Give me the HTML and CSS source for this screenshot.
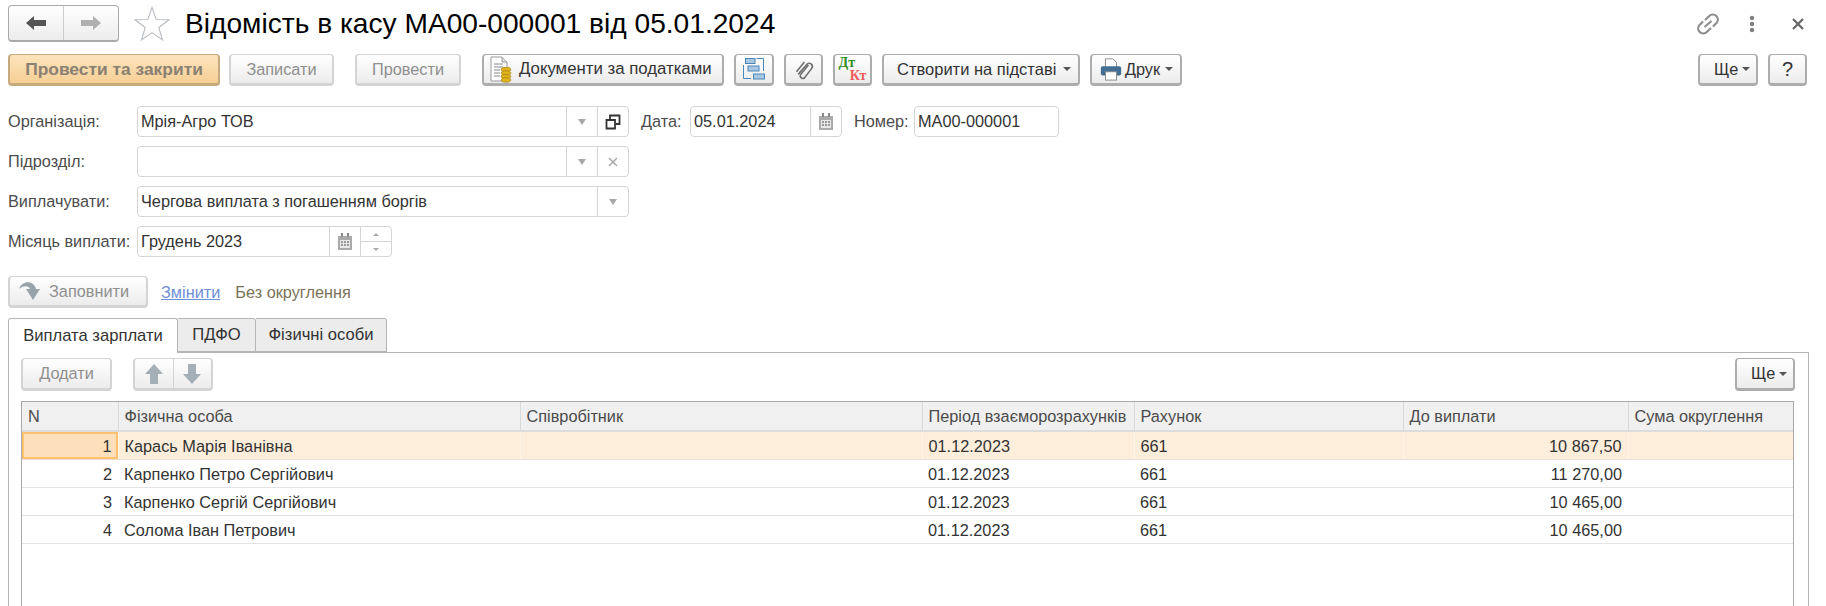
FILE: index.html
```html
<!DOCTYPE html>
<html lang="uk">
<head>
<meta charset="utf-8">
<title>Відомість в касу</title>
<link rel="stylesheet" href="styles.css">
</head>
<body>
<div class="page">
  <header class="titlebar">
    <div class="nav">
      <span class="nav-cell"><svg width="22" height="16" viewBox="0 0 22 16"><path d="M1 8 9 1v4h12v6H9v4z" fill="#555"/></svg></span>
      <span class="nav-cell nav-next"><svg width="22" height="16" viewBox="0 0 22 16"><path d="M21 8 13 1v4H1v6h12v4z" fill="#b0b0b0"/></svg></span>
    </div>
    <svg class="star" width="36" height="36" viewBox="0 0 36 36"><path d="M18 1.500 22.200 13.500 35 13.800 24.800 21.500 28.500 34 18 26.600 7.500 34 11.200 21.500 1 13.800 13.800 13.500z" fill="#fff" stroke="#b9bdc2" stroke-width="1.100"/></svg>
    <h1 class="title">Відомість в касу МА00-000001 від 05.01.2024</h1>
    <div class="win-tools">
      <svg class="tool-link" width="26" height="24" viewBox="0 0 26 24" fill="none" stroke="#8f8f8f" stroke-width="2.200"><path d="M10 8 14 4.200a5 5 0 0 1 7.500 0 5 5 0 0 1 0 6.800l-3.500 3.500"/><path d="M16 16l-4 3.800a5 5 0 0 1-7.500 0 5 5 0 0 1 0-6.800L8 9.500"/><path d="M9.500 15 16.500 9"/></svg>
      <svg class="tool-dots" width="6" height="18" viewBox="0 0 6 18" fill="#808080"><circle cx="3" cy="3" r="2.200"/><circle cx="3" cy="9" r="2.200"/><circle cx="3" cy="15" r="2.200"/></svg>
      <svg class="tool-close" width="12" height="12" viewBox="0 0 12 12" stroke="#666" stroke-width="2.200"><path d="M1 1l10 10M11 1 1 11"/></svg>
    </div>
  </header>

  <div class="cmdbar">
    <button class="btn btn-default w-close">Провести та закрити</button>
    <button class="btn btn-off w-save">Записати</button>
    <button class="btn btn-off w-post">Провести</button>
    <button class="btn w-docs">
      <svg width="28" height="28" viewBox="0 0 28 28"><path d="M5 2h11l5 5v19H5z" fill="#fff" stroke="#999"/><path d="M16 2v5h5" fill="#ddd" stroke="#999"/><path d="M8 9h9M8 12h9M8 15h6M8 18h6M8 21h6" stroke="#888"/><g fill="#e2b21d" stroke="#a07c0a" stroke-width=".7"><ellipse cx="20" cy="14.500" rx="4.800" ry="2.200"/><ellipse cx="20" cy="18" rx="4.800" ry="2.200"/><ellipse cx="20" cy="21.500" rx="4.800" ry="2.200"/><ellipse cx="20" cy="25" rx="4.800" ry="2.200"/></g></svg>
      <span>Документи за податками</span>
    </button>
    <button class="btn btn-icon w-str">
      <svg width="22" height="22" viewBox="0 0 22 22" fill="none" stroke="#4a86b8"><rect x="2.500" y=".5" width="9.500" height="5" fill="#a9c8e2"/><rect x="5" y="8" width="11" height="5" fill="#a9c8e2"/><rect x="10.500" y="16" width="11" height="5" fill="#a9c8e2"/><path d="M.5 7v13.500H8M13.500 .5h7V13"/></svg>
    </button>
    <button class="btn btn-icon w-att">
      <svg width="22" height="23" viewBox="0 0 24 26" fill="none" stroke="#6f6f6f" stroke-width="1.800"><path d="M17 8 8 19a3 3 0 0 0 4.500 3.600l8-10.600c3-4-2.500-8.500-5.500-4.700L5.500 18.500"/><path d="M3.500 15.500 12.500 4.500"/></svg>
    </button>
    <button class="btn btn-icon w-dt"><span class="dtkt"><b class="dt">Дт</b><b class="kt">Кт</b></span></button>
    <button class="btn w-make"><span>Створити на підставі</span><i class="caret"></i></button>
    <button class="btn w-print">
      <svg width="24" height="24" viewBox="0 0 26 26"><path d="M7 2h8l4 4v6H7z" fill="#fff" stroke="#888"/><rect x="2" y="10" width="22" height="10" rx="2" fill="#446f94"/><rect x="7" y="16" width="12" height="9" fill="#fff" stroke="#888"/></svg>
      <span>Друк</span><i class="caret"></i>
    </button>
    <span class="spacer"></span>
    <button class="btn w-more"><span>Ще</span><i class="caret"></i></button>
    <button class="btn w-help">?</button>
  </div>

  <form class="form">
    <div class="row">
      <label class="lbl">Організація:</label>
      <div class="field w-wide">
        <span class="val">Мрія-Агро ТОВ</span>
        <span class="fbtn"><i class="tri"></i></span>
        <span class="fbtn"><svg width="16" height="16" viewBox="0 0 16 16" fill="none" stroke="#333" stroke-width="1.800"><path d="M5 5V1.500h9.500V10H11"/><path d="M1.500 6H10v8.500H1.500z"/></svg></span>
      </div>
      <label class="lbl-in lbl-date">Дата:</label>
      <div class="field w-date">
        <span class="val">05.01.2024</span>
        <span class="fbtn"><svg class="cal" width="14" height="17" viewBox="0 0 14 17"><path d="M0 3h14v14H0z" fill="#aaa"/><path d="M3 0h2v4H3zM9 0h2v4H9z" fill="#888"/><path d="M2 7h10v8H2z" fill="#e8e8e8"/><path d="M3 8h2v2H3zM6 8h2v2H6zM9 8h2v2H9zM3 11h2v2H3zM6 11h2v2H6zM9 11h2v2H9z" fill="#999"/></svg></span>
      </div>
      <label class="lbl-in lbl-num">Номер:</label>
      <div class="field w-num"><span class="val">МА00-000001</span></div>
    </div>
    <div class="row">
      <label class="lbl">Підрозділ:</label>
      <div class="field w-wide">
        <span class="val"></span>
        <span class="fbtn"><i class="tri"></i></span>
        <span class="fbtn"><svg width="10" height="10" viewBox="0 0 10 10" stroke="#aaa" stroke-width="1.600"><path d="M1 1l8 8M9 1 1 9"/></svg></span>
      </div>
    </div>
    <div class="row">
      <label class="lbl">Виплачувати:</label>
      <div class="field w-wide">
        <span class="val">Чергова виплата з погашенням боргів</span>
        <span class="fbtn"><i class="tri"></i></span>
      </div>
    </div>
    <div class="row">
      <label class="lbl">Місяць виплати:</label>
      <div class="field w-month">
        <span class="val">Грудень 2023</span>
        <span class="fbtn"><svg class="cal" width="14" height="17" viewBox="0 0 14 17"><path d="M0 3h14v14H0z" fill="#aaa"/><path d="M3 0h2v4H3zM9 0h2v4H9z" fill="#888"/><path d="M2 7h10v8H2z" fill="#e8e8e8"/><path d="M3 8h2v2H3zM6 8h2v2H6zM9 8h2v2H9zM3 11h2v2H3zM6 11h2v2H6zM9 11h2v2H9z" fill="#999"/></svg></span>
        <span class="spin"><span class="spin-part"><i class="tri-up"></i></span><span class="spin-part"><i class="tri-down"></i></span></span>
      </div>
    </div>
  </form>

  <div class="fillbar">
    <button class="btn btn-off w-fill">
      <svg width="24" height="22" viewBox="0 0 24 22"><path d="M1 9C4 0 16 0 18 9h4l-7 11-7-11h4C11 6 6 5 1 9z" fill="#98a3aa"/></svg>
      <span>Заповнити</span>
    </button>
    <a class="link" href="#">Змінити</a>
    <span class="note">Без округлення</span>
  </div>

  <div class="tabs">
    <span class="tab tab-on w-t1">Виплата зарплати</span>
    <span class="tab w-t2">ПДФО</span>
    <span class="tab w-t3">Фізичні особи</span>
  </div>

  <section class="panel">
    <div class="panelbar">
      <button class="btn btn-off w-add">Додати</button>
      <div class="btn btn-off movers">
        <span class="mv"><svg width="18" height="22" viewBox="0 0 18 22"><path d="M9 1 18 11h-5v10H5V11H0z" fill="#a4afb6"/></svg></span>
        <span class="mv mv-r"><svg width="18" height="22" viewBox="0 0 18 22"><path d="M9 21 18 11h-5V1H5v10H0z" fill="#a4afb6"/></svg></span>
      </div>
      <span class="spacer"></span>
      <button class="btn w-more"><span>Ще</span><i class="caret"></i></button>
    </div>
    <div class="grid-wrap">
      <table class="grid">
        <colgroup><col class="c1"><col class="c2"><col class="c3"><col class="c4"><col class="c5"><col class="c6"><col class="c7"></colgroup>
        <thead><tr><th>N</th><th>Фізична особа</th><th>Співробітник</th><th>Період взаєморозрахунків</th><th>Рахунок</th><th>До виплати</th><th>Сума округлення</th></tr></thead>
        <tbody>
          <tr class="sel"><td class="num cur">1</td><td>Карась Марія Іванівна</td><td></td><td>01.12.2023</td><td>661</td><td class="num">10 867,50</td><td></td></tr>
          <tr><td class="num">2</td><td>Карпенко Петро Сергійович</td><td></td><td>01.12.2023</td><td>661</td><td class="num">11 270,00</td><td></td></tr>
          <tr><td class="num">3</td><td>Карпенко Сергій Сергійович</td><td></td><td>01.12.2023</td><td>661</td><td class="num">10 465,00</td><td></td></tr>
          <tr><td class="num">4</td><td>Солома Іван Петрович</td><td></td><td>01.12.2023</td><td>661</td><td class="num">10 465,00</td><td></td></tr>
        </tbody>
      </table>
    </div>
  </section>
</div>
</body>
</html>
```

FILE: styles.css
```css
* { box-sizing: border-box; }
html, body { margin: 0; padding: 0; background: #fff; }
body { font-family: "Liberation Sans", Arial, sans-serif; font-size: 16.3px; color: #333; }
.page { width: 1826px; height: 606px; overflow: hidden; padding: 5px 0 0 8px; }

/* title */
.titlebar { display: flex; align-items: center; height: 37px; padding-right: 22px; }
.nav { display: flex; width: 111px; height: 37px; border: 1px solid #aaa; border-bottom-width: 2px; border-radius: 4px; background: linear-gradient(#fff, #ececec); }
.nav-cell { flex: 1; display: flex; align-items: center; justify-content: center; }
.nav-next { border-left: 1px solid #ccc; }
.star { margin-left: 15px; }
.title { margin: 0 0 0 15px; font-size: 28.15px; font-weight: 400; color: #000; white-space: nowrap; }
.win-tools { margin-left: auto; display: flex; align-items: center; }
.tool-dots { margin-left: 28px; }
.tool-close { margin-left: 37px; }

/* buttons */
.btn { display: inline-flex; align-items: center; justify-content: center; gap: 4px; height: 32px; padding: 0; border: 2px solid #adadad; border-top-width: 1px; border-bottom-width: 3px; border-radius: 4px; background: linear-gradient(#fff, #ececec); font: 16.3px "Liberation Sans", Arial, sans-serif; color: #333; white-space: nowrap; }
.btn-off { border-color: #d4d4d4; color: #8f8f8f; }
.btn-default { border-color: #c6aa7e; background: linear-gradient(#fde4bd, #f6cf95); color: #8a8072; font-size: 17.4px; font-weight: 700; }
.cmdbar { display: flex; align-items: center; margin-top: 12px; padding-right: 19px; }
.spacer { flex: 1; }
.caret { width: 0; height: 0; border: 4px solid transparent; border-top: 4px solid #555; border-bottom: 0; margin-left: 3px; }
.w-close { width: 212px; }
.w-save { width: 105px; margin-left: 9px; }
.w-post { width: 106px; margin-left: 21px; }
.w-docs { width: 242px; margin-left: 21px; gap: 5px; justify-content: flex-start; padding-left: 2px; font-size: 16.8px; }
.w-str { width: 40px; margin-left: 10px; }
.w-att { width: 39px; margin-left: 10px; }
.w-dt { width: 39px; margin-left: 10px; }
.w-make { width: 198px; margin-left: 10px; justify-content: flex-start; padding-left: 13px; font-size: 16.5px; }
.w-print { width: 92px; margin-left: 10px; gap: 2px; }
.w-more { width: 60px; justify-content: flex-start; padding-left: 14px; gap: 1px; }
.w-help { width: 39px; margin-left: 10px; font-size: 20px; }
.dtkt { display: flex; flex-direction: column; font-family: "Liberation Serif", serif; font-size: 14px; line-height: 13px; width: 28px; }
.dt { color: #2f8f1f; text-align: left; }
.kt { color: #f05a5a; text-align: right; }

/* form */
.form { display: flex; flex-direction: column; gap: 9px; margin-top: 20px; }
.row { display: flex; align-items: center; height: 31px; }
.lbl { width: 129px; color: #4b4b4b; white-space: nowrap; }
.lbl-in { color: #4b4b4b; white-space: nowrap; }
.lbl-date { margin-left: 12px; width: 49px; }
.lbl-num { margin-left: 12px; width: 60px; }
.field { display: flex; height: 31px; border: 1px solid #d5d5d5; border-radius: 4px; background: #fff; }
.val { flex: 1; padding-left: 3px; line-height: 29px; color: #333; white-space: nowrap; overflow: hidden; }
.fbtn { width: 31px; display: flex; align-items: center; justify-content: center; border-left: 1px solid #d5d5d5; }
.w-wide { width: 492px; }
.w-date { width: 152px; }
.w-num { width: 145px; }
.w-month { width: 255px; }
.tri { width: 0; height: 0; border: 4px solid transparent; border-top: 6px solid #a8a8a8; border-bottom: 0; }
.spin { width: 31px; display: flex; flex-direction: column; border-left: 1px solid #d5d5d5; }
.spin-part { flex: 1; display: flex; align-items: center; justify-content: center; }
.spin-part + .spin-part { border-top: 1px solid #d5d5d5; }
.tri-up { width: 0; height: 0; border: 3px solid transparent; border-bottom: 3px solid #aaa; border-top: 0; }
.tri-down { width: 0; height: 0; border: 3px solid transparent; border-top: 3px solid #aaa; border-bottom: 0; }

/* fill */
.fillbar { display: flex; align-items: center; margin-top: 19px; height: 32px; }
.w-fill { width: 140px; gap: 7px; justify-content: flex-start; padding-left: 8px; }
.link { margin-left: 13px; color: #6d8fd6; text-decoration: underline; }
.note { margin-left: 15px; color: #7b7357; }

/* tabs */
.tabs { display: flex; margin-top: 10px; height: 35px; position: relative; z-index: 1; }
.tab { display: flex; align-items: center; justify-content: center; height: 34px; background: #ececec; border: 1px solid #b5b5b5; border-left-width: 0; border-radius: 0 3px 0 0; color: #333; font-size: 16.6px; }
.tab-on { background: #fff; border-left-width: 1px; border-bottom: 0; height: 35px; border-radius: 3px 3px 0 0; }
.w-t1 { width: 170px; }
.w-t2 { width: 78px; }
.w-t3 { width: 131px; }

/* panel */
.panel { margin-top: -1px; width: 1801px; height: 260px; border: 1px solid #b5b5b5; padding: 5px 13px 0 12px; }
.panelbar { display: flex; align-items: center; height: 33px; }
.w-add { width: 91px; height: 33px; }
.movers { width: 80px; height: 33px; margin-left: 21px; gap: 0; }
.mv { flex: 1; display: flex; align-items: center; justify-content: center; height: 100%; }
.mv-r { border-left: 1px solid #d4d4d4; }
.panelbar .w-more { height: 33px; }
.grid-wrap { margin-top: 10px; width: 1773px; height: 210px; border: 1px solid #aaa; }
.grid { width: 1771px; table-layout: fixed; border-collapse: collapse; }
.c1 { width: 96px; } .c2 { width: 402px; } .c3 { width: 402px; } .c4 { width: 212px; }
.c5 { width: 269px; } .c6 { width: 225px; } .c7 { width: 165px; }
.grid th { height: 29px; background: #f0f0f0; border-right: 1px solid #d9d9d9; border-bottom: 2px solid #dcdcdc; padding: 0 6px; text-align: left; font-weight: 400; color: #4b4b4b; white-space: nowrap; overflow: hidden; }
.grid th:last-child, .grid td:last-child { border-right: 0; }
.grid td { height: 28px; padding: 2px 6px 0; border-bottom: 1px solid #e3e3e3; color: #333; white-space: nowrap; }
.grid .num { text-align: right; }
.sel td { background: #fdeedb; border-right: 1px solid #fff6ea; border-bottom-color: #e8e0d6; }
.sel .cur { background: #fde0bb; box-shadow: inset 0 0 0 2px #fbc16f; }
```
